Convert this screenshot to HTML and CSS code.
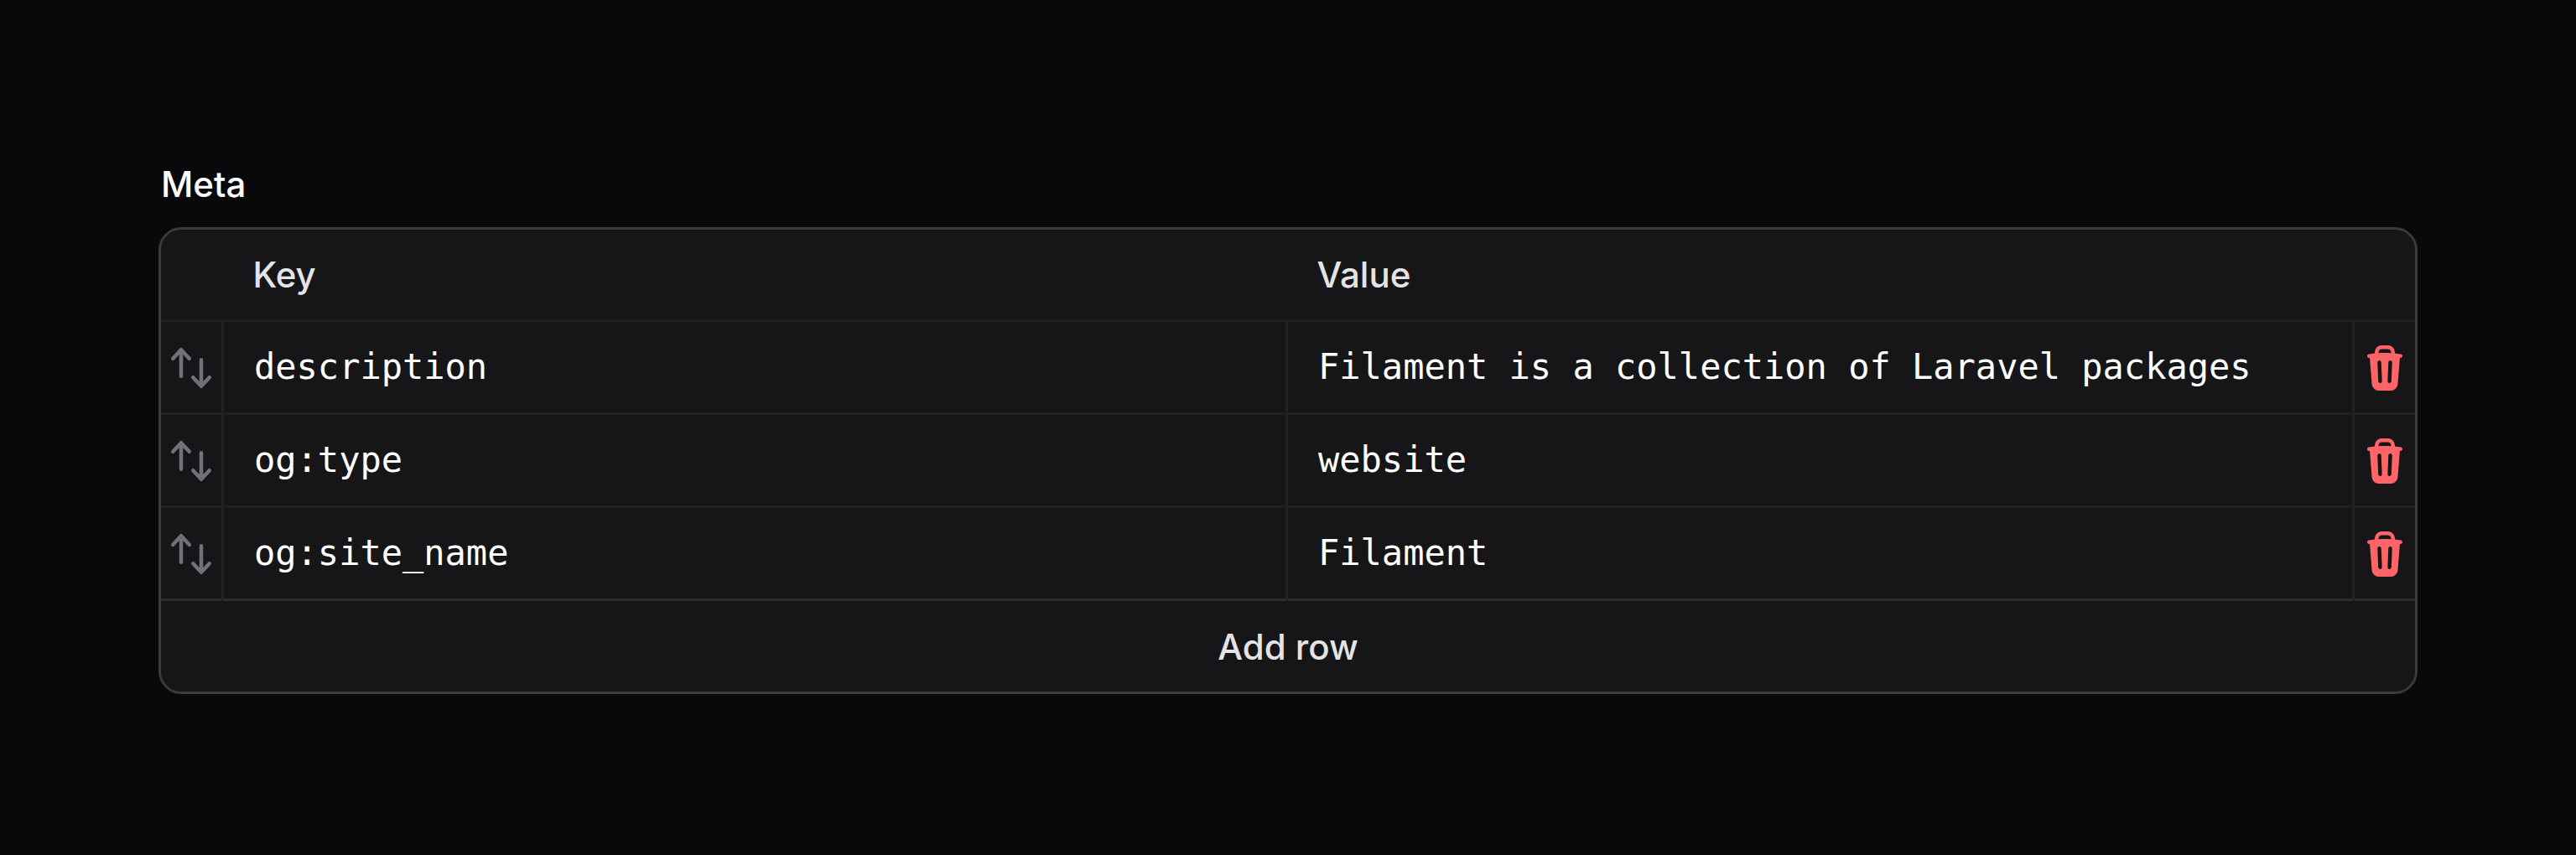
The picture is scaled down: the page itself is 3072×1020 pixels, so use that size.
FILE: index.html
```html
<!DOCTYPE html>
<html lang="en">
<head>
<meta charset="utf-8">
<title>Meta</title>
<link rel="stylesheet" href="styles.css">
</head>
<body>
<svg class="sprite" aria-hidden="true">
  <symbol id="arrows" viewBox="0 0 20 20"><path fill-rule="evenodd" clip-rule="evenodd" d="M2.24 6.8a.75.75 0 0 0 1.06-.04l1.95-2.1v8.59a.75.75 0 0 0 1.5 0V4.66l1.95 2.1a.75.75 0 1 0 1.1-1.02l-3.25-3.5a.75.75 0 0 0-1.1 0L2.2 5.74a.75.75 0 0 0 .04 1.06Zm8 6.4a.75.75 0 0 0-.04 1.06l3.25 3.5a.75.75 0 0 0 1.1 0l3.25-3.5a.75.75 0 1 0-1.1-1.02l-1.95 2.1V6.75a.75.75 0 0 0-1.5 0v8.59l-1.95-2.1a.75.75 0 0 0-1.06-.04Z"/></symbol>
  <symbol id="trash" viewBox="0 0 20 20"><path fill-rule="evenodd" clip-rule="evenodd" d="M8.75 1A2.75 2.75 0 0 0 6 3.75v.443c-.795.077-1.584.176-2.365.298a.75.75 0 1 0 .23 1.482l.149-.022.841 10.518A2.75 2.75 0 0 0 7.596 19h4.807a2.75 2.75 0 0 0 2.742-2.53l.841-10.52.149.023a.75.75 0 0 0 .23-1.482A41.03 41.03 0 0 0 14 4.193V3.75A2.75 2.75 0 0 0 11.25 1h-2.5ZM10 4c.84 0 1.673.025 2.5.075V3.75c0-.69-.56-1.25-1.25-1.25h-2.5c-.69 0-1.25.56-1.25 1.25v.325C8.327 4.025 9.16 4 10 4ZM8.58 7.72a.75.75 0 0 0-1.5.06l.3 7.5a.75.75 0 1 0 1.5-.06l-.3-7.5Zm4.34.06a.75.75 0 1 0-1.5-.06l-.3 7.5a.75.75 0 1 0 1.5.06l.3-7.5Z"/></symbol>
</svg>
<main class="field">
  <div class="label">Meta</div>
  <div class="key-value">
    <div class="row head">
      <div></div>
      <div class="heading">Key</div>
      <div class="heading">Value</div>
      <div></div>
    </div>
    <div class="row">
      <div class="cell action"><svg class="icon"><use href="#arrows"/></svg></div>
      <div class="cell text">description</div>
      <div class="cell text">Filament is a collection of Laravel packages</div>
      <div class="cell action danger"><svg class="icon"><use href="#trash"/></svg></div>
    </div>
    <div class="row">
      <div class="cell action"><svg class="icon"><use href="#arrows"/></svg></div>
      <div class="cell text">og:type</div>
      <div class="cell text">website</div>
      <div class="cell action danger"><svg class="icon"><use href="#trash"/></svg></div>
    </div>
    <div class="row last">
      <div class="cell action"><svg class="icon"><use href="#arrows"/></svg></div>
      <div class="cell text">og:site_name</div>
      <div class="cell text">Filament</div>
      <div class="cell action danger"><svg class="icon"><use href="#trash"/></svg></div>
    </div>
    <div class="add">Add row</div>
  </div>
</main>
</body>
</html>
```
FILE: styles.css
```css
* {
  box-sizing: border-box;
}

body {
  margin: 0;
  background: #09090b;
  color: #fff;
  font: 500 42px/72px Inter, sans-serif;
}

.sprite {
  display: none;
}

.field {
  height: 1020px;
  padding: 183px 189px 0;
}

.label {
  padding-left: 3px;
  margin-bottom: 16px;
  line-height: 73px;
  height: 72px;
}

.key-value {
  border: 3px solid #3a3a3c;
  border-radius: 27px;
  background: #161618;
}

.row {
  display: grid;
  grid-template-columns: 75px 1269px 1fr 72px;
  height: 111px;
}

.head {
  height: 110px;
  border-bottom: 3px solid #212123;
}

.heading,
.add {
  color: #e4e4e7;
  line-height: 108px;
}

.heading {
  padding-left: 34.5px;
}

.cell {
  border-right: 3px solid #212123;
  border-bottom: 3px solid #212123;
}

.cell:last-child {
  border-right: 0;
}

.last .cell {
  border-bottom-width: 0;
  background: linear-gradient(#2c2c2e, #2c2c2e) bottom / 100% 3px no-repeat;
}

.text {
  padding-left: 36px;
  font: 400 42px/108px "DejaVu Sans Mono", monospace;
  white-space: nowrap;
}

.action {
  display: flex;
  align-items: flex-start;
  justify-content: center;
  padding-top: 24.5px;
  color: #71717b;
}

.danger {
  color: #ff6467;
}

.icon {
  width: 60px;
  height: 60px;
  fill: currentColor;
}

.add {
  height: 108px;
  line-height: 110px;
  text-align: center;
}
```
